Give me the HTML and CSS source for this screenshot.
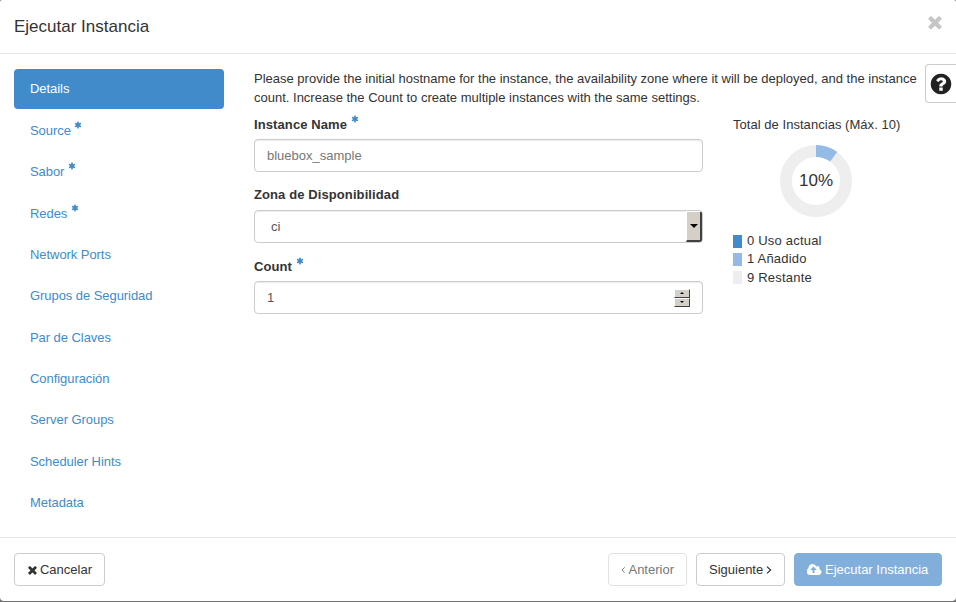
FILE: index.html
```html
<!DOCTYPE html>
<html>
<head>
	<meta charset="UTF-8">
	<title>Ejecutar Instancia</title>
	<link rel="stylesheet" href="styles.css">
</head>
<body>
<div class="modal">
	<div class="modal-header">
		<h4>Ejecutar Instancia</h4>
		<svg class="close-icon" viewBox="0 0 1792 1792"><path d="M1490 1322q0 40-28 68l-136 136q-28 28-68 28t-68-28l-294-294-294 294q-28 28-68 28t-68-28l-136-136q-28-28-28-68t28-68l294-294-294-294q-28-28-28-68t28-68l136-136q28-28 68-28t68 28l294 294 294-294q28-28 68-28t68 28l136 136q28 28 28 68t-28 68l-294 294 294 294q28 28 28 68z"/></svg>
	</div>
	<div class="modal-body">
		<ul class="steps">
			<li class="active">Details</li>
			<li>Source <svg class="req" viewBox="0 0 1792 1792"><path d="M1546 1050q46 26 59.5 77.5t-12.5 97.5l-64 110q-26 46-77.5 59.5t-97.5-12.5l-266-153v307q0 52-38 90t-90 38h-128q-52 0-90-38t-38-90v-307l-266 153q-46 26-97.5 12.5t-77.5-59.5l-64-110q-26-46-12.5-97.5t59.5-77.5l266-154-266-154q-46-26-59.5-77.5t12.5-97.5l64-110q26-46 77.5-59.5t97.5 12.5l266 153v-307q0-52 38-90t90-38h128q52 0 90 38t38 90v307l266-153q46-26 97.5-12.5t77.5 59.5l64 110q26 46 12.5 97.5t-59.5 77.5l-266 154z"/></svg></li>
			<li>Sabor <svg class="req" viewBox="0 0 1792 1792"><path d="M1546 1050q46 26 59.5 77.5t-12.5 97.5l-64 110q-26 46-77.5 59.5t-97.5-12.5l-266-153v307q0 52-38 90t-90 38h-128q-52 0-90-38t-38-90v-307l-266 153q-46 26-97.5 12.5t-77.5-59.5l-64-110q-26-46-12.5-97.5t59.5-77.5l266-154-266-154q-46-26-59.5-77.5t12.5-97.5l64-110q26-46 77.5-59.5t97.5 12.5l266 153v-307q0-52 38-90t90-38h128q52 0 90 38t38 90v307l266-153q46-26 97.5-12.5t77.5 59.5l64 110q26 46 12.5 97.5t-59.5 77.5l-266 154z"/></svg></li>
			<li>Redes <svg class="req" viewBox="0 0 1792 1792"><path d="M1546 1050q46 26 59.5 77.5t-12.5 97.5l-64 110q-26 46-77.5 59.5t-97.5-12.5l-266-153v307q0 52-38 90t-90 38h-128q-52 0-90-38t-38-90v-307l-266 153q-46 26-97.5 12.5t-77.5-59.5l-64-110q-26-46-12.5-97.5t59.5-77.5l266-154-266-154q-46-26-59.5-77.5t12.5-97.5l64-110q26-46 77.5-59.5t97.5 12.5l266 153v-307q0-52 38-90t90-38h128q52 0 90 38t38 90v307l266-153q46-26 97.5-12.5t77.5 59.5l64 110q26 46 12.5 97.5t-59.5 77.5l-266 154z"/></svg></li>
			<li>Network Ports</li>
			<li>Grupos de Seguridad</li>
			<li>Par de Claves</li>
			<li>Configuración</li>
			<li>Server Groups</li>
			<li>Scheduler Hints</li>
			<li>Metadata</li>
		</ul>
		<div class="step-content">
			<p class="intro">Please provide the initial hostname for the instance, the availability zone where it will be deployed, and the instance count. Increase the Count to create multiple instances with the same settings.</p>
			<div class="columns">
				<div class="fields">
					<label>Instance Name <svg class="req" viewBox="0 0 1792 1792"><path d="M1546 1050q46 26 59.5 77.5t-12.5 97.5l-64 110q-26 46-77.5 59.5t-97.5-12.5l-266-153v307q0 52-38 90t-90 38h-128q-52 0-90-38t-38-90v-307l-266 153q-46 26-97.5 12.5t-77.5-59.5l-64-110q-26-46-12.5-97.5t59.5-77.5l266-154-266-154q-46-26-59.5-77.5t12.5-97.5l64-110q26-46 77.5-59.5t97.5 12.5l266 153v-307q0-52 38-90t90-38h128q52 0 90 38t38 90v307l266-153q46-26 97.5-12.5t77.5 59.5l64 110q26 46 12.5 97.5t-59.5 77.5l-266 154z"/></svg></label>
					<div class="input name-input">bluebox_sample</div>
					<label>Zona de Disponibilidad</label>
					<div class="input select-input">
						<span>ci</span>
						<div class="select-arrow"><i></i></div>
					</div>
					<label>Count <svg class="req" viewBox="0 0 1792 1792"><path d="M1546 1050q46 26 59.5 77.5t-12.5 97.5l-64 110q-26 46-77.5 59.5t-97.5-12.5l-266-153v307q0 52-38 90t-90 38h-128q-52 0-90-38t-38-90v-307l-266 153q-46 26-97.5 12.5t-77.5-59.5l-64-110q-26-46-12.5-97.5t59.5-77.5l266-154-266-154q-46-26-59.5-77.5t12.5-97.5l64-110q26-46 77.5-59.5t97.5 12.5l266 153v-307q0-52 38-90t90-38h128q52 0 90 38t38 90v307l266-153q46-26 97.5-12.5t77.5 59.5l64 110q26 46 12.5 97.5t-59.5 77.5l-266 154z"/></svg></label>
					<div class="input count-input">
						<span>1</span>
						<div class="spinner">
							<div class="spin-btn"><i class="up"></i></div>
							<div class="spin-btn"><i class="down"></i></div>
						</div>
					</div>
				</div>
				<div class="quota">
					<div class="quota-title">Total de Instancias (Máx. 10)</div>
					<div class="donut">
						<svg width="72" height="72" viewBox="0 0 72 72">
							<circle cx="36" cy="36" r="30" fill="none" stroke="#eeeeee" stroke-width="12"/>
							<circle cx="36" cy="36" r="30" fill="none" stroke="#94bbe6" stroke-width="12" stroke-dasharray="18.85 188.5" transform="rotate(-90 36 36)"/>
						</svg>
						<span>10%</span>
					</div>
					<ul class="legend">
						<li><i class="used"></i>0 Uso actual</li>
						<li><i class="added"></i>1 Añadido</li>
						<li><i class="left"></i>9 Restante</li>
					</ul>
				</div>
			</div>
		</div>
		<div class="help-btn">
			<svg viewBox="0 0 1792 1792"><path d="M1024 1376v-192q0-14-9-23t-23-9h-192q-14 0-23 9t-9 23v192q0 14 9 23t23 9h192q14 0 23-9t9-23zm256-672q0-88-55.5-163t-138.5-116-170-41q-243 0-371 213-15 24 8 42l132 100q7 6 19 6 16 0 25-12 53-68 86-92 34-24 86-24 48 0 85.5 26t37.5 59q0 38-20 61t-68 45q-63 28-115.5 86.5t-52.5 125.5v36q0 14 9 23t23 9h192q14 0 23-9t9-23q0-19 21.5-49.5t54.5-49.5q32-18 49-28.5t46-35 44.5-48 28-60.5 12.5-81zm384 192q0 209-103 385.5t-279.5 279.5-385.5 103-385.5-103-279.5-279.5-103-385.5 103-385.5 279.5-279.5 385.5-103 385.5 103 279.5 279.5 103 385.5z"/></svg>
		</div>
	</div>
	<div class="modal-footer">
		<div class="btn btn-cancel">
			<svg class="btn-icon" viewBox="0 0 1792 1792"><path d="M1490 1322q0 40-28 68l-136 136q-28 28-68 28t-68-28l-294-294-294 294q-28 28-68 28t-68-28l-136-136q-28-28-28-68t28-68l294-294-294-294q-28-28-28-68t28-68l136-136q28-28 68-28t68 28l294 294 294-294q28-28 68-28t68 28l136 136q28 28 28 68t-28 68l-294 294 294 294q28 28 28 68z"/></svg>
			Cancelar
		</div>
		<div class="footer-right">
			<div class="btn btn-prev">
				<svg class="angle" viewBox="0 0 6 10"><path d="M5 1.500 1.200 5 5 8.500"/></svg>
				Anterior
			</div>
			<div class="btn btn-next">
				Siguiente
				<svg class="angle" viewBox="0 0 6 10"><path d="M1 1.500 4.800 5 1 8.500"/></svg>
			</div>
			<div class="btn btn-launch">
				<svg class="cloud" viewBox="0 0 1920 1792"><path d="M1216 864q0-14-9-23l-352-352q-9-9-23-9t-23 9l-351 351q-10 12-10 24 0 14 9 23t23 9h224v352q0 13 9.5 22.5t22.5 9.5h192q13 0 22.5-9.500t9.500-22.500v-352h224q13 0 22.500-9.500t9.500-22.500zm640 288q0 159-112.500 271.500t-271.500 112.500h-1088q-185 0-316.500-131.500t-131.500-316.500q0-130 70-240t188-165q-2-30-2-43 0-212 150-362t362-150q156 0 285.500 87t188.500 231q71-62 166-62 106 0 181 75t75 181q0 76-41 138 130 31 213.500 135.500t83.500 238.500z"/></svg>
				Ejecutar Instancia
			</div>
		</div>
	</div>
</div>
</body>
</html>
```

FILE: styles.css
```css
*{
	box-sizing: border-box;
}
html,body{
	margin: 0;
	height: 100%;
}
body{
	font-family: "Liberation Sans", Arial, sans-serif;
	font-size: 13px;
	color: #333333;
	background-color: #707070;
	overflow: hidden;
}
.modal{
	height: 601px;
	display: flex;
	flex-direction: column;
	border-radius: 2px 2px 4px 4px;
	background-color: #fff;
}
.modal-header{
	height: 54px;
	flex: none;
	padding: 0 14px;
	display: flex;
	align-items: center;
	justify-content: space-between;
	border-bottom: 1px solid #e5e5e5;
}
.modal-header h4{
	margin: 0;
	font-size: 17px;
	font-weight: normal;
	line-height: 1;
}
.close-icon{
	width: 20px;
	height: 20px;
	margin: -10px -3px 0 0;
	fill: #c6c6c6;
}
.modal-body{
	flex: 1;
	position: relative;
	display: flex;
	padding: 15px 36px 0 14px;
}
.steps{
	list-style: none;
	margin: 0;
	padding: .4px 0 0;
	width: 210px;
	flex: none;
	color: #428bca;
	letter-spacing: -.06px;
}
.steps li{
	height: 40px;
	margin-bottom: 1.380px;
	padding-left: 16px;
	line-height: 40px;
	border-radius: 4px;
}
.steps li.active{
	background-color: #428bca;
	color: #fff;
}
.req{
	width: 8px;
	height: 8px;
	fill: #428bca;
	vertical-align: 6px;
}
.step-content{
	flex: 1;
	margin-left: 30px;
	min-width: 0;
}
.intro{
	margin: 0;
	line-height: 19px;
}
.columns{
	display: flex;
	margin-top: 8px;
}
.fields{
	width: 449px;
	flex: none;
}
.fields label{
	display: block;
	font-weight: bold;
	height: 18px;
	line-height: 18px;
	margin-bottom: 6px;
	letter-spacing: .1px;
}
.input{
	height: 33px;
	border: 1px solid #cccccc;
	border-radius: 4px;
	background-color: #fff;
	color: #555555;
	display: flex;
	align-items: center;
	box-shadow: inset 0 1px 1px rgba(0,0,0,.075);
}
.name-input{
	padding-left: 12px;
	margin-bottom: 14px;
	color: #777;
}
.select-input{
	padding-left: 16px;
	margin-bottom: 14px;
	justify-content: space-between;
	overflow: hidden;
}
.select-arrow{
	width: 16px;
	height: 31px;
	background-color: #d4d0c8;
	border-top: 1px solid #fff;
	border-left: 1px solid #fff;
	border-right: 2px solid #404040;
	border-bottom: 2px solid #404040;
	display: flex;
	align-items: center;
	justify-content: center;
}
.select-arrow i{
	border-left: 4px solid transparent;
	border-right: 4px solid transparent;
	border-top: 4px solid #000;
}
.count-input{
	padding: 0 12px;
	justify-content: space-between;
}
.spinner{
	width: 16px;
	display: flex;
	flex-direction: column;
}
.spin-btn{
	height: 9px;
	background-color: #d4d0c8;
	border-top: 1px solid #fff;
	border-left: 1px solid #fff;
	border-right: 1px solid #404040;
	border-bottom: 1px solid #404040;
	display: flex;
	align-items: center;
	justify-content: center;
}
.spin-btn i{
	border-left: 2px solid transparent;
	border-right: 2px solid transparent;
}
.spin-btn i.up{
	border-bottom: 2px solid #000;
}
.spin-btn i.down{
	border-top: 2px solid #000;
}
.quota{
	width: 190px;
	margin: 1px 0 0 30px;
}
.quota-title{
	line-height: 18px;
	white-space: nowrap;
	letter-spacing: .04px;
}
.donut{
	position: relative;
	width: 72px;
	height: 72px;
	margin: 11px 0 0 47px;
}
.donut svg{
	display: block;
}
.donut span{
	position: absolute;
	left: 0;
	right: 0;
	top: 0;
	line-height: 72px;
	text-align: center;
	font-size: 17px;
}
.legend{
	list-style: none;
	margin: 15px 0 0;
	padding: 0;
}
.legend li{
	height: 18.400px;
	line-height: 18.400px;
	display: flex;
	align-items: center;
	letter-spacing: .2px;
}
.legend i{
	width: 9px;
	height: 13px;
	margin-right: 5px;
}
.legend i.used{
	background-color: #428bca;
}
.legend i.added{
	background-color: #94bbe6;
}
.legend i.left{
	background-color: #eeeeee;
}
.help-btn{
	position: absolute;
	top: 10px;
	right: 0;
	width: 31px;
	height: 39px;
	border: 1px solid #cccccc;
	border-right: 0;
	border-radius: 4px 0 0 4px;
	background-color: #fff;
	display: flex;
	align-items: center;
	justify-content: center;
}
.help-btn svg{
	width: 24px;
	height: 24px;
	fill: #222;
}
.modal-footer{
	height: 64px;
	flex: none;
	border-top: 1px solid #e5e5e5;
	padding: 15px 14px 0;
	display: flex;
	justify-content: space-between;
	align-items: flex-start;
}
.footer-right{
	display: flex;
	gap: 9px;
}
.btn{
	height: 33px;
	padding: 0 12px;
	border: 1px solid #cccccc;
	border-radius: 4px;
	background-color: #fff;
	display: flex;
	align-items: center;
	gap: 3px;
	white-space: nowrap;
}
.btn-cancel{
	width: 91px;
	padding-left: 11px;
	gap: 1px;
}
.btn-prev{
	width: 79px;
	color: #777;
	border-color: #e2e2e2;
}
.btn-next{
	width: 89px;
}
.btn-launch{
	width: 148px;
	background-color: #81aedb;
	border-color: #81aedb;
	color: #fff;
}
.btn-icon{
	width: 14px;
	height: 14px;
	fill: #333;
}
.angle{
	width: 6px;
	height: 10px;
	fill: none;
	stroke: currentColor;
	stroke-width: 1.300;
}
.cloud{
	width: 15px;
	height: 14px;
	fill: #fff;
}
```
